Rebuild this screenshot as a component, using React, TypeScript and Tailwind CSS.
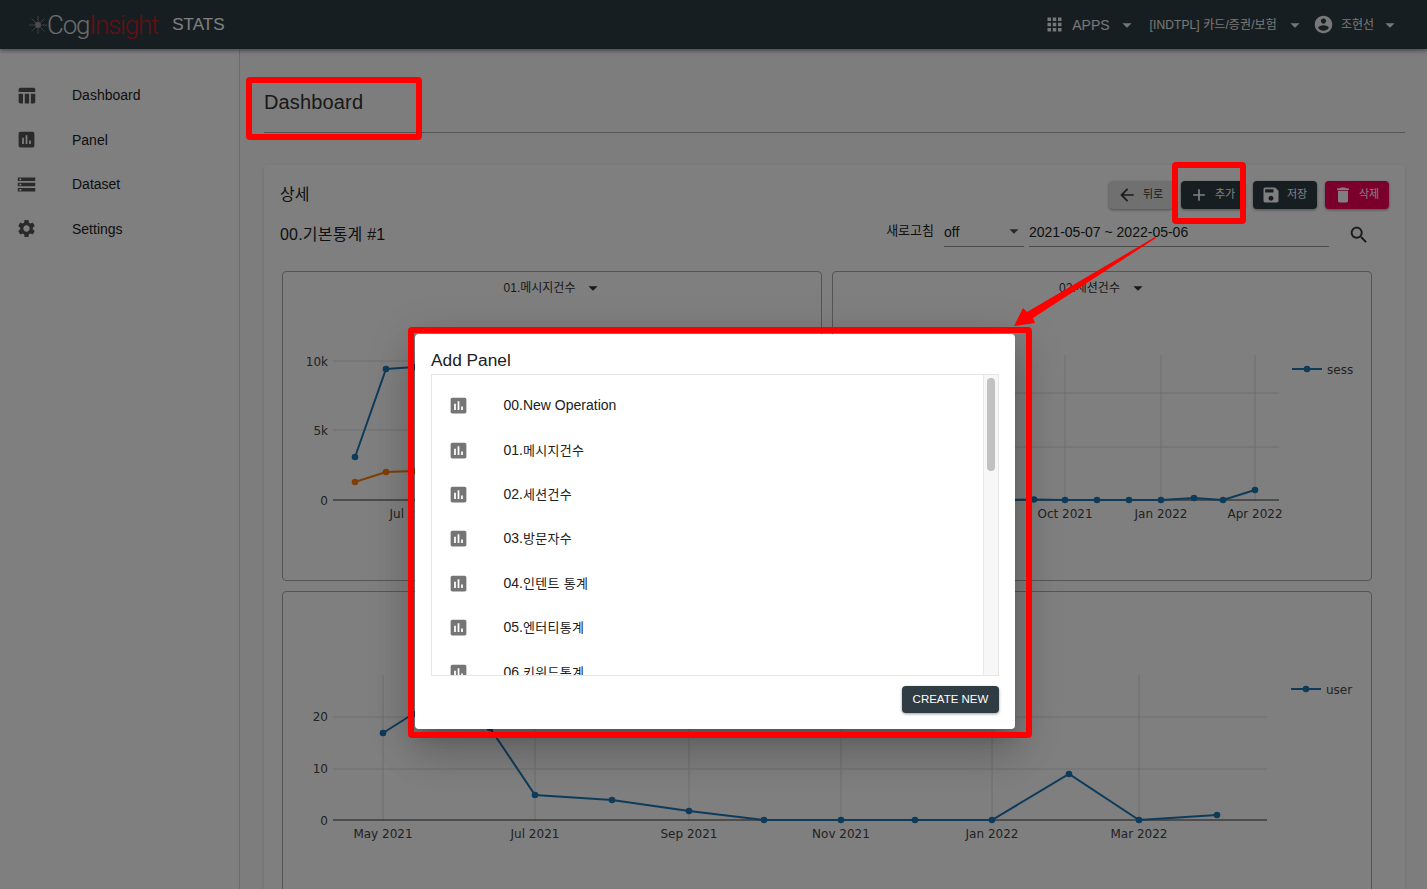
import React from "react";

const P = {
  table: "M10 10.02h5V21h-5zM17 21h3c1.1 0 2-.9 2-2v-9h-5v11zm3-18H5c-1.1 0-2 .9-2 2v3h19V5c0-1.1-.9-2-2-2zM3 19c0 1.1.9 2 2 2h3V10H3v9z",
  assessment: "M19 3H5c-1.1 0-2 .9-2 2v14c0 1.1.9 2 2 2h14c1.1 0 2-.9 2-2V5c0-1.1-.9-2-2-2zM9 17H7v-7h2v7zm4 0h-2V7h2v10zm4 0h-2v-4h2v4z",
  storage: "M2 20h20v-4H2v4zm2-3h2v2H4v-2zM2 4v4h20V4H2zm4 3H4V5h2v2zm-4 7h20v-4H2v4zm2-3h2v2H4v-2z",
  settings: "M19.14 12.94c.04-.3.06-.61.06-.94 0-.32-.02-.64-.07-.94l2.03-1.58c.18-.14.23-.41.12-.61l-1.92-3.32c-.12-.22-.37-.29-.59-.22l-2.39.96c-.5-.38-1.03-.7-1.62-.94l-.36-2.54c-.04-.24-.24-.41-.48-.41h-3.84c-.24 0-.43.17-.47.41l-.36 2.54c-.59.24-1.13.57-1.62.94l-2.39-.96c-.22-.08-.47 0-.59.22L2.74 8.87c-.12.21-.08.47.12.61l2.03 1.58c-.05.3-.09.63-.09.94s.02.64.07.94l-2.03 1.58c-.18.14-.23.41-.12.61l1.92 3.32c.12.22.37.29.59.22l2.39-.96c.5.38 1.03.7 1.62.94l.36 2.54c.05.24.24.41.48.41h3.84c.24 0 .44-.17.47-.41l.36-2.54c.59-.24 1.13-.56 1.62-.94l2.39.96c.22.08.47 0 .59-.22l1.92-3.32c.12-.22.07-.47-.12-.61l-2.01-1.58zM12 15.6c-1.98 0-3.6-1.62-3.6-3.6s1.62-3.6 3.6-3.6 3.6 1.62 3.6 3.6-1.62 3.6-3.6 3.6z",
  apps: "M4 8h4V4H4v4zm6 12h4v-4h-4v4zm-6 0h4v-4H4v4zm0-6h4v-4H4v4zm6 0h4v-4h-4v4zm6-10v4h4V4h-4zm-6 4h4V4h-4v4zm6 6h4v-4h-4v4zm0 6h4v-4h-4v4z",
  account: "M12 2C6.48 2 2 6.48 2 12s4.48 10 10 10 10-4.48 10-10S17.52 2 12 2zm0 3c1.66 0 3 1.34 3 3s-1.34 3-3 3-3-1.34-3-3 1.34-3 3-3zm0 14.2c-2.5 0-4.71-1.28-6-3.22.03-1.99 4-3.08 6-3.08 1.99 0 5.97 1.09 6 3.08-1.29 1.94-3.5 3.22-6 3.22z",
  caret: "M7 10l5 5 5-5z",
  back: "M20 11H7.83l5.59-5.59L12 4l-8 8 8 8 1.41-1.41L7.83 13H20v-2z",
  add: "M19 13h-6v6h-2v-6H5v-2h6V5h2v6h6v2z",
  save: "M17 3H5c-1.11 0-2 .9-2 2v14c0 1.1.89 2 2 2h14c1.1 0 2-.9 2-2V7l-4-4zm-5 16c-1.66 0-3-1.34-3-3s1.34-3 3-3 3 1.34 3 3-1.34 3-3 3zm3-10H5V5h10v4z",
  del: "M6 19c0 1.1.9 2 2 2h8c1.1 0 2-.9 2-2V7H6v12zM19 4h-3.5l-1-1h-5l-1 1H5v2h14V4z",
  search: "M15.5 14h-.79l-.28-.27C15.41 12.59 16 11.11 16 9.5 16 5.91 13.09 3 9.5 3S3 5.91 3 9.5 5.91 16 9.5 16c1.61 0 3.09-.59 4.23-1.57l.27.28v.79l5 4.99L20.49 19l-4.99-5zm-6 0C7.01 14 5 11.99 5 9.5S7.01 5 9.5 5 14 7.01 14 9.5 11.99 14 9.5 14z",
};

const Icon = ({ d, className }: { d: string; className?: string }) => (
  <svg viewBox="0 0 24 24" fill="currentColor" className={className}>
    <path d={d} />
  </svg>
);

const menu = [
  { icon: P.table, label: "Dashboard" },
  { icon: P.assessment, label: "Panel" },
  { icon: P.storage, label: "Dataset" },
  { icon: P.settings, label: "Settings" },
];

const panels = [
  "00.New Operation",
  "01.메시지건수",
  "02.세션건수",
  "03.방문자수",
  "04.인텐트 통계",
  "05.엔터티통계",
  "06.키워드통계",
];

const BLUE = "#1f77b4";
const ORANGE = "#ff7f0e";
const GRID = "#dcdcdc";

const pts = (p: number[][]) => p.map((a) => a.join(",")).join(" ");

// hangul sits a little smaller than the latin text in the list rows
const Row = ({ text }: { text: string }) => (
  <span className="ml-[35px] text-[14px]">
    {text.split(/([가-힣]+)/).map((part, i) =>
      i % 2 ? (
        <span key={i} className="text-[13px] tracking-[0.3px]">{part}</span>
      ) : (
        part
      ),
    )}
  </span>
);

const Series = ({ data, color }: { data: number[][]; color: string }) => (
  <g>
    <polyline points={pts(data)} fill="none" stroke={color} strokeWidth={2} />
    {data.map(([x, y]) => (
      <circle key={x} cx={x} cy={y} r={3.3} fill={color} />
    ))}
  </g>
);

const AxisText = ({ x, y, children, anchor = "middle" }: { x: number; y: number; children: string; anchor?: "middle" | "end" | "start" }) => (
  <text x={x} y={y} textAnchor={anchor} fontSize={12} fill="#444" fontFamily="'DejaVu Sans', sans-serif">
    {children}
  </text>
);

const Legend = ({ x, y, label }: { x: number; y: number; label: string }) => (
  <g>
    <line x1={x} x2={x + 30} y1={y} y2={y} stroke={BLUE} strokeWidth={2} />
    <circle cx={x + 15} cy={y} r={3.3} fill={BLUE} />
    <AxisText x={x + 35} y={y + 5} anchor="start">{label}</AxisText>
  </g>
);

const PanelTitle = ({ title }: { title: string }) => (
  <div className="flex h-[31px] items-center justify-center pl-[4px] text-xs text-[#333]">
    <span>{title}</span>
    <Icon d={P.caret} className="ml-[7px] h-[22px] w-[22px] text-[#333]" />
  </div>
);

const ChartOne = () => (
  <svg viewBox="283 305 538 275" className="mt-[2px] block h-[275px] w-full">
    <line x1={333} x2={820} y1={361} y2={361} stroke={GRID} />
    <line x1={333} x2={820} y1={430} y2={430} stroke={GRID} />
    <line x1={333} x2={820} y1={500} y2={500} stroke="#333" />
    <AxisText x={328} y={366} anchor="end">10k</AxisText>
    <AxisText x={328} y={435} anchor="end">5k</AxisText>
    <AxisText x={328} y={505} anchor="end">0</AxisText>
    <AxisText x={414} y={518}>Jul 2021</AxisText>
    <Series data={[[355, 457], [386, 369], [415, 367], [450, 366]]} color={BLUE} />
    <Series data={[[355, 482], [386, 472], [415, 471], [450, 470]]} color={ORANGE} />
  </svg>
);

const ChartTwo = () => (
  <svg viewBox="833 305 538 275" className="mt-[2px] block h-[275px] w-full">
    {[393, 447].map((y) => (
      <line key={y} x1={1000} x2={1279} y1={y} y2={y} stroke={GRID} />
    ))}
    {[1065, 1161, 1255].map((x) => (
      <line key={x} x1={x} x2={x} y1={355} y2={500} stroke={GRID} />
    ))}
    <line x1={1000} x2={1279} y1={500} y2={500} stroke="#333" />
    <Series
      data={[[1002, 500], [1034, 499.5], [1065, 500], [1097, 500], [1129, 500], [1161, 500], [1194, 498], [1223, 500], [1255, 490]]}
      color={BLUE}
    />
    <AxisText x={1065} y={518}>Oct 2021</AxisText>
    <AxisText x={1161} y={518}>Jan 2022</AxisText>
    <AxisText x={1255} y={518}>Apr 2022</AxisText>
    <Legend x={1292} y={369} label="sess" />
  </svg>
);

const ChartThree = () => (
  <svg viewBox="283 625 1088 264" className="block h-[264px] w-full">
    {[717, 769].map((y) => (
      <line key={y} x1={333} x2={1267} y1={y} y2={y} stroke={GRID} />
    ))}
    {[383, 535, 689, 841, 992, 1139].map((x) => (
      <line key={x} x1={x} x2={x} y1={675} y2={820} stroke={GRID} />
    ))}
    <line x1={333} x2={1267} y1={820} y2={820} stroke="#333" />
    <AxisText x={328} y={721} anchor="end">20</AxisText>
    <AxisText x={328} y={773} anchor="end">10</AxisText>
    <AxisText x={328} y={825} anchor="end">0</AxisText>
    {[
      [383, "May 2021"],
      [535, "Jul 2021"],
      [689, "Sep 2021"],
      [841, "Nov 2021"],
      [992, "Jan 2022"],
      [1139, "Mar 2022"],
    ].map(([x, t]) => (
      <AxisText key={t} x={x as number} y={838}>{t as string}</AxisText>
    ))}
    <Series
      data={[[383, 733], [413, 714], [460, 690], [490, 728], [535, 795], [612, 800], [689, 811], [764, 820], [841, 820], [915, 820], [992, 820], [1069, 774], [1139, 820], [1217, 815]]}
      color={BLUE}
    />
    <Legend x={1291} y={689} label="user" />
  </svg>
);

const ActionButton = ({ icon, label, className }: { icon: string; label: string; className: string }) => (
  <button className={`flex h-7 w-16 items-center gap-[6px] rounded pl-2 text-[11px] shadow-[0_1px_3px_rgba(0,0,0,0.4)] ${className}`}>
    <Icon d={icon} className="h-5 w-5" />
    <span className="-mt-[1px]">{label}</span>
  </button>
);

const Logo = () => (
  <div className="flex items-center">
    <svg viewBox="0 0 20 20" className="h-5 w-5" fill="none" stroke="#8a8a8a" strokeWidth={0.9}>
      <circle cx={10} cy={10} r={3} fill="#9a9a9a" />
      <path d="M10 1v5M10 14v5M1 10h5M14 10h5M3.6 3.6l3.5 3.5M12.9 12.9l3.5 3.5M16.4 3.6l-3.5 3.5M7.1 12.9l-3.5 3.5" />
    </svg>
    <span className="-ml-[1px] font-['Roboto'] text-[26px] leading-none font-light tracking-[-1.2px]">
      <span className="text-[#d8d8d8]">Cog</span>
      <span className="text-[#c3202a]">Insight</span>
    </span>
  </div>
);

export default function App() {
  return (
    <div className="relative h-[889px] w-full overflow-hidden bg-[#fafafa] font-['Liberation_Sans','Noto_Sans_CJK_KR',sans-serif] text-[#212121]">
      <header className="relative z-10 flex h-[49px] items-center bg-[#2f3c44] pr-[26px] pl-[28px] text-white shadow-[0_2px_4px_rgba(0,0,0,0.4)]">
        <Logo />
        <span className="ml-[14px] text-[17px]">STATS</span>
        <div className="ml-auto flex items-center text-[#eee]">
          <Icon d={P.apps} className="h-[21px] w-[21px]" />
          <span className="ml-[7px] text-sm">APPS</span>
          <Icon d={P.caret} className="ml-[6px] h-[22px] w-[22px]" />
          <span className="ml-[12px] text-xs tracking-[0.1px]">[INDTPL] 카드/증권/보험</span>
          <Icon d={P.caret} className="ml-[7px] h-[22px] w-[22px]" />
          <Icon d={P.account} className="ml-[7px] h-[21px] w-[21px]" />
          <span className="ml-[7px] text-xs">조현선</span>
          <Icon d={P.caret} className="ml-[5px] h-[22px] w-[22px]" />
        </div>
      </header>

      <div className="flex h-[840px]">
        <aside className="w-[240px] shrink-0 border-r border-[#d8d8d8] bg-white pt-[24px]">
          {menu.map((m) => (
            <div key={m.label} className="flex h-[44.5px] items-center pl-4">
              <Icon d={m.icon} className="h-[21px] w-[21px] text-[#555]" />
              <span className="ml-[35px] text-sm">{m.label}</span>
            </div>
          ))}
        </aside>

        <main className="min-w-0 flex-1 pt-[40px] pr-[22px] pl-[24px]">
          <div className="h-[44px] border-b border-[#aaa]">
            <h1 className="text-xl leading-[26px] tracking-[0.15px] text-[#333]">Dashboard</h1>
          </div>

          <section className="mt-[32px] rounded bg-white pt-4 pr-4 pl-4 shadow-[0_1px_3px_rgba(0,0,0,0.15)]">
            <div className="flex h-7 items-center justify-between">
              <h2 className="text-base">상세</h2>
              <div className="flex gap-2">
                <ActionButton icon={P.back} label="뒤로" className="bg-[#e0e0e0] text-[#333]" />
                <ActionButton icon={P.add} label="추가" className="bg-[#2f3c44] text-white" />
                <ActionButton icon={P.save} label="저장" className="bg-[#2f3c44] text-white" />
                <ActionButton icon={P.del} label="삭제" className="bg-[#f50057] text-white" />
              </div>
            </div>

            <div className="flex h-[38px] items-end">
              <h3 className="text-base tracking-[0.2px]">00.기본통계 #1</h3>
              <div className="ml-auto flex items-end pr-[19px]">
                <span className="mb-[7px] text-[13px]">새로고침</span>
                <div className="ml-[10px] flex h-[30px] w-20 items-center justify-between border-b border-[#999] pt-[1px] text-sm">
                  <span>off</span>
                  <Icon d={P.caret} className="-mt-[2px] -mr-[1px] h-[22px] w-[22px] text-[#555]" />
                </div>
                <div className="ml-[5px] flex h-[30px] w-[300px] items-center border-b border-[#999] pt-[1px] text-sm">
                  2021-05-07 ~ 2022-05-06
                </div>
                <Icon d={P.search} className="mb-[1px] ml-[19px] h-[22px] w-[22px] text-[#333]" />
              </div>
            </div>

            <div className="mt-[24px] pr-[17px] pl-[2px]">
              <div className="flex gap-[10px]">
                <div className="h-[310px] flex-1 rounded-sm border border-[#aaa]">
                  <PanelTitle title="01.메시지건수" />
                  <ChartOne />
                </div>
                <div className="h-[310px] flex-1 rounded-sm border border-[#aaa]">
                  <PanelTitle title="02.세션건수" />
                  <ChartTwo />
                </div>
              </div>
              <div className="mt-[10px] h-[320px] rounded-sm border border-[#aaa]">
                <div className="h-[33px]" />
                <ChartThree />
              </div>
            </div>
          </section>
        </main>
      </div>

      <div className="absolute inset-0 z-20 bg-black/50" />

      <div className="absolute top-[334px] left-[415px] z-30 h-[395px] w-[600px] rounded bg-white px-4 text-[#212121] shadow-[0_11px_15px_-7px_rgba(0,0,0,0.2),0_24px_38px_3px_rgba(0,0,0,0.14),0_9px_46px_8px_rgba(0,0,0,0.12)]">
        <h2 className="flex h-[40px] items-end pb-[1px] text-[17.3px] leading-[26px]">Add Panel</h2>
        <div className="relative h-[302px] w-[568px] overflow-hidden border border-[#e6e6e6]">
          <div className="pt-[8.5px]">
            {panels.map((p) => (
              <div key={p} className="flex h-[44.4px] items-center pl-[15.5px]">
                <Icon d={P.assessment} className="h-[21px] w-[21px] text-[#757575]" />
                <Row text={p} />
              </div>
            ))}
          </div>
          <div className="absolute top-0 right-0 h-full w-[15px] border-l border-[#e8e8e8] bg-[#f7f7f7]">
            <div className="mx-auto mt-[3px] h-[93px] w-2 rounded bg-[#c1c1c1]" />
          </div>
        </div>
        <div className="mt-[10px] flex justify-end">
          <button className="flex h-[27px] w-[97px] items-center justify-center rounded bg-[#2f3c44] text-[11.5px] text-white shadow-[0_1px_3px_rgba(0,0,0,0.4)]">
            CREATE NEW
          </button>
        </div>
      </div>

      {/* red annotations over the shot */}
      <div className="absolute top-[77px] left-[246px] z-40 h-[63px] w-[176px] rounded-sm border-[6px] border-[#ff0000]" />
      <div className="absolute top-[162px] left-[1172px] z-40 h-[62px] w-[74px] rounded-sm border-[6px] border-[#ff0000]" />
      <div className="absolute top-[327px] left-[408px] z-40 h-[411px] w-[624px] rounded-sm border-[6px] border-[#ff0000]" />
      <svg viewBox="0 0 1427 889" className="absolute inset-0 z-40 h-[889px] w-[1427px]">
        <polygon points="1156,238 1033,318 1035,323 1014,326 1023,308 1027,312 1155,237" fill="#ff0000" />
      </svg>
    </div>
  );
}
